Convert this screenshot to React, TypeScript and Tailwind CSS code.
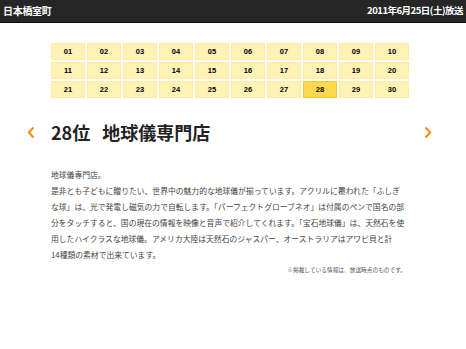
const days = Array.from({ length: 30 }, (_, i) => String(i + 1).padStart(2, '0'))

const jp = { fontFamily: '"Noto Sans CJK JP", "Liberation Sans", sans-serif' }

function Chevron({ dir }: { dir: 'left' | 'right' }) {
  return (
    <svg width="8" height="13" viewBox="0 0 8 13" className="shrink-0">
      <path
        d={dir === 'left' ? 'M6.5 1.5 L1.8 6.5 L6.5 11.5' : 'M1.5 1.5 L6.2 6.5 L1.5 11.5'}
        fill="none"
        stroke="#f28c0f"
        strokeWidth="2"
      />
    </svg>
  )
}

export default function App() {
  return (
    <div className="w-[466px] h-[349px] bg-white overflow-hidden" style={jp}>
      {/* Header */}
      <header className="h-[23px] bg-[#262626] border-b border-[#0c0c0c] flex items-center justify-between pl-[3px] pr-[3px] text-white font-bold">
        <span className="text-[10px] leading-none tracking-[-0.3px]">日本橋室町</span>
        <span className="text-[9.5px] leading-none tracking-[-0.5px]">2011年6月25日(土)放送</span>
      </header>

      {/* Day grid */}
      <div className="ml-[51px] mt-[20px] w-[358px] grid grid-cols-10 gap-[2px]">
        {days.map((d) => (
          <div
            key={d}
            className={
              d === '28'
                ? 'h-[17px] flex items-center justify-center bg-[#ffd84d] border border-[#f5c52e] text-[7.5px] font-bold text-black'
                : 'h-[17px] flex items-center justify-center bg-[#fff2b5] border border-[#ffeaa0] text-[7.5px] font-bold text-black'
            }
            style={{ fontFamily: '"Liberation Sans", Arial, sans-serif' }}
          >
            {d}
          </div>
        ))}
      </div>

      {/* Title row */}
      <div className="mt-[23px] flex items-center pl-[27px] pr-[34px]">
        <Chevron dir="left" />
        <h1 className="flex-1 ml-[16px] text-[18px] leading-[22px] font-bold text-[#222]">
          <span>28位</span>
          <span className="ml-[12px]">地球儀専門店</span>
        </h1>
        <Chevron dir="right" />
      </div>

      {/* Body */}
      <div className="ml-[51px] mr-[56px] mt-[24px] text-[7.8px] leading-[16px] text-[#444] whitespace-nowrap">
        <p>地球儀専門店。</p>
        <p>
          是非とも子どもに贈りたい、世界中の魅力的な地球儀が揃っています。アクリルに覆われた「ふしぎ
          <br />
          な球」は、光で発電し磁気の力で自転します。「パーフェクトグローブネオ」は付属のペンで国名の部
          <br />
          分をタッチすると、国の現在の情報を映像と音声で紹介してくれます。「宝石地球儀」は、天然石を使
          <br />
          用したハイクラスな地球儀。アメリカ大陸は天然石のジャスパー、オーストラリアはアワビ貝と計
          <br />
          14種類の素材で出来ています。
        </p>
        <p className="text-right text-[5.7px] leading-[10px] text-[#555] mt-[2px] pr-[4px]">
          ※掲載している情報は、放送時点のものです。
        </p>
      </div>
    </div>
  )
}
